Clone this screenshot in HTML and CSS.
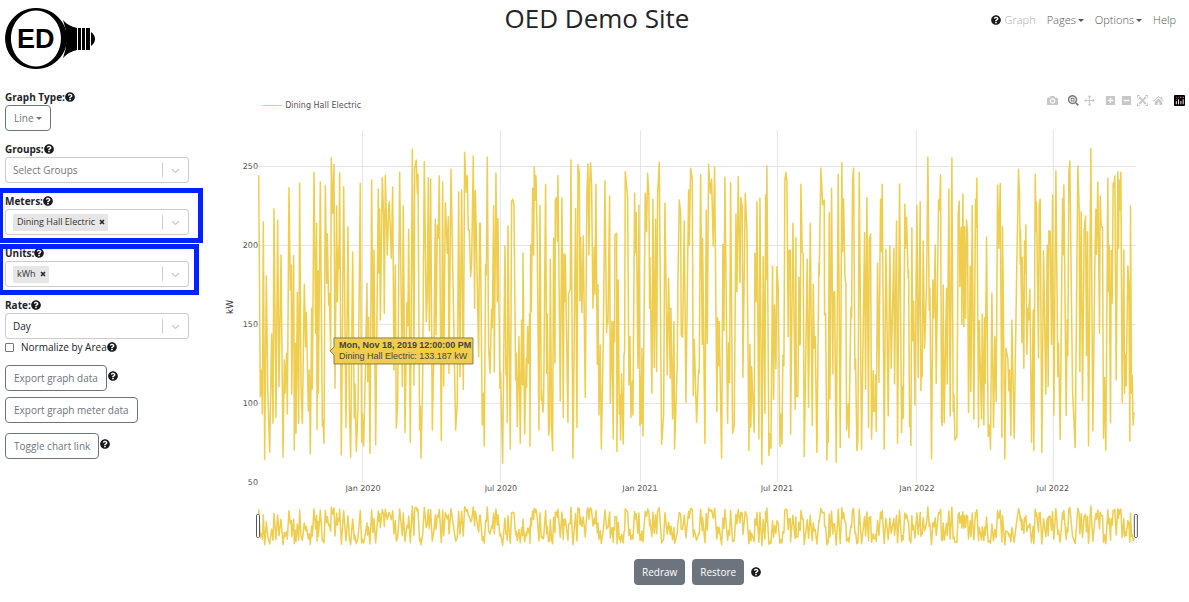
FILE: index.html
```html
<!DOCTYPE html>
<html lang="en">
<head>
<meta charset="utf-8">
<title>OED Demo Site</title>
<link rel="stylesheet" href="styles.css">
</head>
<body>
<svg class="defs" aria-hidden="true">
  <symbol id="question" viewBox="0 0 512 512"><path d="M504 256c0 137-111 248-248 248S8 393 8 256C8 119.100 119 8 256 8s248 111.100 248 248zM262.700 90c-54.500 0-89.300 23-116.600 63.800-3.500 5.300-2.400 12.400 2.700 16.200l34.700 26.300c5.200 4 12.600 3 16.700-2.100 17.900-22.700 30.100-35.800 57.300-35.800 20.400 0 45.700 13.100 45.700 33 0 15-12.400 22.700-32.500 34C247.100 238.500 216 255 216 296v4c0 6.600 5.400 12 12 12h56c6.600 0 12-5.400 12-12v-1.300c0-28.500 83.200-29.600 83.200-106.700 0-58-60.200-102-116.500-102zM256 338c-25.400 0-46 20.600-46 46s20.600 46 46 46 46-20.600 46-46-20.600-46-46-46z"/></symbol>
  <symbol id="chevron" viewBox="0 0 20 20"><path d="M4.500 7.500c.5-.4 1-.4 1.500 0L10 11.400l4-3.900c.5-.4 1-.4 1.500 0s.4 1.200 0 1.600l-4.700 4.500c-.5.400-1.100.4-1.600 0L4.500 9.100c-.4-.4-.4-1.200 0-1.600z"/></symbol>
</svg>

<header class="header">
  <a class="logo" href="#" aria-label="Home">
    <svg viewBox="0 0 90 62" width="90" height="62">
      <path fill-rule="evenodd" d="M31 0a31 30.500 0 1 0 .1 0zM31 2.500a25 28 0 1 1-.1 0z"/>
      <path d="M58 12q5 6 14 8v22q-9 2-14 8 7-19 0-38z"/>
      <path d="M73 20h3v22h-3zM77 20h3v22h-3zM81 20h4v22h-4zM86 24q4 3 4 7t-4 7z"/>
      <text class="logo-text" x="12" y="40">ED</text>
    </svg>
  </a>
  <h1 class="title">OED Demo Site</h1>
  <nav class="nav">
    <svg class="help nav-help"><use href="#question"/></svg>
    <a class="disabled" href="#">Graph</a>
    <button class="caret" type="button">Pages</button>
    <button class="caret" type="button">Options</button>
    <a href="#">Help</a>
  </nav>
</header>

<div class="layout">
  <aside class="sidebar">
    <div class="field">
      <div class="label"><label for="type">Graph Type:</label><svg class="help"><use href="#question"/></svg></div>
      <button class="btn caret" id="type" type="button">Line</button>
    </div>
    <div class="field">
      <div class="label"><label for="groups">Groups:</label><svg class="help"><use href="#question"/></svg></div>
      <div class="picker">
        <select class="muted" id="groups"><option>Select Groups</option></select>
        <span class="arrow"><svg><use href="#chevron"/></svg></span>
      </div>
    </div>
    <div class="field mark mark-meters">
      <div class="label"><label for="meters">Meters:</label><svg class="help"><use href="#question"/></svg></div>
      <div class="picker">
        <span class="chip">Dining Hall Electric<button type="button" aria-label="Remove Dining Hall Electric"><svg viewBox="0 0 6 6"><path d="M1 1l4 4M5 1L1 5"/></svg></button></span>
        <input id="meters" type="text">
        <span class="arrow"><svg><use href="#chevron"/></svg></span>
      </div>
    </div>
    <div class="field mark mark-units">
      <div class="label"><label for="units">Units:</label><svg class="help"><use href="#question"/></svg></div>
      <div class="picker">
        <span class="chip">kWh<button type="button" aria-label="Remove kWh"><svg viewBox="0 0 6 6"><path d="M1 1l4 4M5 1L1 5"/></svg></button></span>
        <input id="units" type="text">
        <span class="arrow"><svg><use href="#chevron"/></svg></span>
      </div>
    </div>
    <div class="field rate">
      <div class="label"><label for="rate">Rate:</label><svg class="help"><use href="#question"/></svg></div>
      <div class="picker">
        <select id="rate"><option>Day</option></select>
        <span class="arrow"><svg><use href="#chevron"/></svg></span>
      </div>
    </div>
    <div class="check"><input id="area" type="checkbox"><label for="area">Normalize by Area</label><svg class="help"><use href="#question"/></svg></div>
    <div class="action"><button class="btn" type="button">Export graph data</button><svg class="help"><use href="#question"/></svg></div>
    <div class="action"><button class="btn" type="button">Export graph meter data</button></div>
    <div class="action spaced"><button class="btn" type="button">Toggle chart link</button><svg class="help"><use href="#question"/></svg></div>
  </aside>

  <main class="main">
    <div class="toolbar">
      <div class="legend"><span class="swatch"></span>Dining Hall Electric</div>
      <div class="modebar">
        <button type="button" aria-label="Download plot"><svg viewBox="0 0 12 12"><path fill-rule="evenodd" d="M1 3h2l1-2h4l1 2h2q1 0 1 1v6q0 1-1 1H1q-1 0-1-1V4q0-1 1-1zM6 3.500a3 3 0 1 0 .1 0zM6 5a1.600 1.600 0 1 1-.1 0z"/></svg></button>
        <button class="active gap" type="button" aria-label="Zoom"><svg viewBox="0 0 12 12"><path fill-rule="evenodd" d="M5 0a5 5 0 1 0 2.900 9l2.600 3L12 10.500 9 8A5 5 0 0 0 5 0zM5 1.500a3.500 3.500 0 1 1-.1 0zM3 3h4v4H3zM4 4v2h2V4z"/></svg></button>
        <button type="button" aria-label="Pan"><svg viewBox="0 0 12 12"><path d="M6 0l2 2.500H6.500v3h3V4L12 6 9.500 8V6.500h-3v3H8L6 12 4 9.500h1.500v-3h-3V8L0 6l2.500-2v1.500h3v-3H4z"/></svg></button>
        <button class="gap" type="button" aria-label="Zoom in"><svg viewBox="0 0 12 12"><path fill-rule="evenodd" d="M1 1h10v10H1zM5.200 3v2.200H3v1.600h2.200V9h1.600V6.800H9V5.200H6.800V3z"/></svg></button>
        <button type="button" aria-label="Zoom out"><svg viewBox="0 0 12 12"><path fill-rule="evenodd" d="M1 1h10v10H1zM3 5.200v1.600h6V5.200z"/></svg></button>
        <button type="button" aria-label="Autoscale"><svg viewBox="0 0 12 12"><path d="M0 0h3v1H1v2H0zM9 0h3v3h-1V1H9zM0 9h1v2h2v1H0zM11 9h1v3H9v-1h2zM2 2h3L4.200 2.800 6 4.700l1.800-1.900L7 2h3v3l-.8-.8L7.300 6l1.900 1.800L10 7v3H7l.8-.8L6 7.300 4.200 9.200 5 10H2V7l.8.8L4.700 6 2.800 4.200 2 5z"/></svg></button>
        <button type="button" aria-label="Reset axes"><svg viewBox="0 0 12 12"><path d="M6 1l2.500 2.300V2h1.500v2.700L12 6.500l-.7.700L6 2.500.7 7.200 0 6.500zM6 3.800l4 3.500V11H7V8H5v3H2V7.300z"/></svg></button>
        <a class="plotly" href="#" aria-label="Plotly"><svg viewBox="0 0 12 12"><rect width="12" height="12" rx="1"/><path class="pink" d="M2 2h1v1H2zM4.500 2h1v1h-1zM2 4.500h1v1H2z"/><path class="white" d="M2 6.500h1V10H2zM4.500 4.500h1V10h-1zM7 2h1v1H7zM7 6.500h1V10H7zM9.500 2h1v1h-1zM9.500 4.500h1V10h-1z"/></svg></a>
      </div>
    </div>
    <svg class="chart" viewBox="0 0 991 440" role="img" aria-label="Dining Hall Electric, kW">
      <g class="grid">
        <path d="M60 54.500h878M60 133.500h878M60 212.500h878M60 291.500h878"/>
        <path d="M164.500 18v352M302.500 18v352M442.500 18v352M579.500 18v352M718.500 18v352M855.500 18v352"/>
      </g>
      <path class="line" id="line"/>
      <g class="axis end">
        <text x="60" y="57">250</text><text x="60" y="136">200</text><text x="60" y="215">150</text><text x="60" y="294">100</text><text x="60" y="373">50</text>
      </g>
      <g class="axis mid">
        <text x="165" y="379">Jan 2020</text><text x="303" y="379">Jul 2020</text><text x="442" y="379">Jan 2021</text><text x="579" y="379">Jul 2021</text><text x="719" y="379">Jan 2022</text><text x="855" y="379">Jul 2022</text>
      </g>
      <text class="unit" transform="translate(35 195) rotate(-90)">kW</text>
      <path class="line" id="range"/>
      <g class="handle"><rect x="58.500" y="402.500" width="3" height="23" rx="1"/><rect x="936.500" y="402.500" width="3" height="23" rx="1"/></g>
      <g class="tip">
        <path d="M132 239l4-4v-9h139v26H136v-9z"/>
        <text class="strong" x="141" y="236">Mon, Nov 18, 2019 12:00:00 PM</text>
        <text x="141" y="247">Dining Hall Electric: 133.187 kW</text>
      </g>
    </svg>
    <div class="buttons">
      <button class="solid" type="button">Redraw</button>
      <button class="solid" type="button">Restore</button>
      <svg class="help"><use href="#question"/></svg>
    </div>
  </main>
</div>
<script src="chart.js"></script>
</body>
</html>
```
FILE: styles.css
```css
* { box-sizing: border-box; }
body {
  margin: 0;
  background: #fff;
  color: #212529;
  font: 10px/16px "Open Sans", "Noto Sans", sans-serif;
}
button, input, select { font: inherit; color: inherit; margin: 0; }
a { color: inherit; text-decoration: none; }
button { cursor: pointer; }
.defs { position: absolute; width: 0; height: 0; }

.header {
  display: grid;
  grid-template-columns: 1fr auto 1fr;
  align-items: start;
  padding: 8px 0 0 5px;
  height: 89px;
}
.logo svg { display: block; }
.logo-text { font: bold 27px "Liberation Sans", Arial, sans-serif; }
.title { margin: 0; font-size: 26px; line-height: 20px; font-weight: 500; }
.nav {
  display: flex;
  justify-content: flex-end;
  align-items: center;
  gap: 11px;
  padding: 4px 13px 0 0;
  font-size: 11px;
}
.nav a, .nav button { color: #555; font-weight: 300; }
.nav .disabled { color: #aaa; }
.nav button { padding: 0; border: 0; background: none; }
.nav-help { margin-right: -7px; }
.help { width: 10px; height: 10px; flex: none; fill: #17191c; display: block; }
.caret::after {
  content: "";
  display: inline-block;
  margin-left: 2px;
  vertical-align: 2px;
  border: 3px solid transparent;
  border-top-color: currentColor;
  border-bottom: 0;
}

.layout { display: grid; grid-template-columns: minmax(0, 1fr) minmax(0, 5fr); }
.sidebar { padding: 0 9px 0 5px; }
.field { margin-bottom: 10px; position: relative; }
.label { display: flex; align-items: center; height: 16px; font-weight: 700; }
.btn {
  height: 26px;
  padding: 0 8px;
  border: 1px solid #6c757d;
  border-radius: 4px;
  background: #fff;
  color: #6c757d;
  white-space: nowrap;
  display: block;
}
.picker {
  display: flex;
  align-items: center;
  height: 26px;
  border: 1px solid #ccc;
  border-radius: 3px;
  padding-left: 7px;
}
.picker select, .picker input {
  flex: 1;
  min-width: 0;
  border: 0;
  padding: 0;
  background: none;
  appearance: none;
  outline: 0;
}
.picker .muted { color: #777; }
.arrow {
  width: 26px;
  height: 14px;
  border-left: 1px solid #ccc;
  display: grid;
  place-items: center;
  pointer-events: none;
}
.arrow svg { width: 13px; height: 13px; fill: #ccc; }
.chip {
  display: flex;
  align-items: center;
  height: 17px;
  padding: 0 3px 0 4px;
  background: #e6e6e6;
  border-radius: 1px;
  font-size: 9px;
  color: #333;
  white-space: nowrap;
}
.chip button { border: 0; background: none; padding: 0; margin-left: 4px; display: flex; }
.chip svg { width: 6px; height: 6px; stroke: #222; stroke-width: 1.5; }
.mark::after {
  content: "";
  position: absolute;
  left: -5px;
  border: 5px solid #0022ff;
  border-left-width: 3px;
  pointer-events: none;
}
.mark-meters::after { top: -5px; bottom: -8px; right: -14px; }
.mark-units::after { top: -1px; bottom: -8px; right: -10px; }
.rate { margin-bottom: 0; }
.check { display: flex; align-items: center; height: 16px; margin-bottom: 10px; }
.check input {
  appearance: none;
  width: 9px;
  height: 9px;
  border: 1px solid #777;
  border-radius: 1px;
  margin-right: 7px;
}
.action { display: flex; align-items: center; gap: 1px; margin-bottom: 6px; }
.spaced { margin-top: 10px; }
.action .help { margin-bottom: 4px; }

.main { min-width: 0; }
.toolbar {
  display: flex;
  justify-content: space-between;
  align-items: center;
  height: 23px;
  padding: 0 3px 0 64px;
}
.legend {
  display: flex;
  align-items: center;
  gap: 3px;
  padding-top: 10px;
  font: 8px/12px "DejaVu Sans", sans-serif;
  color: #555;
}
.swatch { width: 20px; height: 1px; background: #efcd4e; }
.modebar { display: flex; gap: 4px; }
.modebar button, .modebar a { border: 0; padding: 0; background: none; width: 12px; height: 12px; }
.modebar svg { width: 11px; height: 11px; display: block; fill: #c7c7c7; }
.modebar .active svg { fill: #777; }
.modebar .gap { margin-left: 5px; }
.modebar .plotly { margin-left: 5px; }
.plotly rect { fill: #000; }
.plotly .pink { fill: #e8507a; }
.plotly .white { fill: #fff; }

.chart { display: block; width: 100%; height: auto; }
.grid path { stroke: #e5e5e5; stroke-width: 1; fill: none; }
.line { fill: none; stroke: #efcd4e; stroke-width: 1.500; stroke-linejoin: round; }
.axis { font: 8px "DejaVu Sans", sans-serif; fill: #555; }
.end { text-anchor: end; }
.mid { text-anchor: middle; }
.unit { font: 9px "DejaVu Sans", sans-serif; fill: #333; text-anchor: middle; }
.handle rect { fill: #fff; stroke: #555; }
.tip path { fill: #efcd4e; stroke: #8a7c4b; }
.tip text { font: 9px "Liberation Sans", Arial, sans-serif; fill: #444; }
.tip .strong { font-weight: bold; }

.buttons { display: flex; justify-content: center; align-items: center; gap: 7px; padding: 7px 0 0 8px; }
.solid {
  height: 26px;
  padding: 0 8px;
  border: 0;
  border-radius: 4px;
  background: #6c757d;
  color: #fff;
}
```
FILE: chart.js
```js
// Readings as "x:y" pairs, three units per chart pixel, y measured down from the top of the plot.
const parts = [
  { start: -114, points: "116:136 121:800 125:720 127:852 130:275 134:988 139:437 143:770 149:967 155:612 159:880 162:237 168:862 173:270 177:770 183:375 189:982 193:690 195:790 200:670 202:852 207:173 211:480 214:405 215:793 221:377 223:960 226:640 228:910 232:487 236:880 239:160 243:770 247:880 253:463 257:650 259:548 265:843 268:720 271:972 275:535 277:778 282:127 287:610 290:280 291:898 294:423 295:790 301:155 307:888 309:870 312:940 316:167 320:460 322:312 326:525 328:490 332:660 334:83 338:250 342:103 345:775 350:227 352:515 356:350 357:415 359:128 364:975 371:170 378:892 384:290 388:820 392:982 398:366 403:865 405:762 409:964 414:832 421:160 425:938 427:850 431:948 436:730 441:460 443:755 446:562 450:970 455:150 459:700 462:360 467:945 475:177 477:430 479:237 481:570 487:143 491:260 493:550 496:136 502:375 506:230 508:215 514:385 518:171 522:720 526:405 529:895 533:820 539:127 547:770 550:227 555:908 561:517 564:587 566:298 571:938 577:58 582:765 584:115 589:90 592:190 594:133 599:900 601:830 603:984 608:760 613:95 619:575 622:500 625:143 628:602 632:147 637:900 642:650 646:268 648:615 652:285 655:325 658:138 664:932 668:157 671:768 676:218 682:370 685:260 687:730 693:118 699:450 707:900 712:818 716:186 720:740 725:180 730:778 734:67 739:187 742:137 745:300 748:300 752:440 755:400 760:78 764:535 766:182 769:310 776:680 779:280" },
  { start: 666, points: "1:280 7:885 10:790 13:948 17:405 19:435 22:82 26:650 30:730 35:538 37:593 41:228 43:725 48:130 52:515 54:266 60:775 62:727 68:1000 75:348 78:735 80:685 82:878 84:288 91:957 95:215 98:208 102:225 107:750 109:670 112:890 117:620 121:940 125:570 128:765 129:370 134:912 139:685 140:772 143:590 146:700 149:552 150:950 152:345 154:545 158:175 161:375 163:112 166:210 168:137 172:345 177:900 180:226 184:810 185:780 189:847 191:815 197:163 200:730 202:552 206:915 209:890 211:388 215:885 218:962 221:325 225:700 226:210 230:202 232:333 234:137 241:813 246:203 250:863 252:370 254:515 256:375 264:877 266:490 271:480 273:90 279:985 287:236 291:893 294:104 298:125 300:513 302:322 306:548 310:318 316:802 321:180 324:102 327:375 330:130 332:98 335:165 339:535 343:352 345:493 348:163 352:703 354:465 357:855 361:645 364:957 370:640 375:152 380:608 382:565 384:580 389:198 391:820 396:574 400:927 401:575 404:635 405:315 410:310 411:965 415:450 418:853 420:795 422:930 425:732 430:942 432:675 434:665 436:125 443:200 447:765 450:620 453:863 457:753 459:855 464:190 467:368 469:248 474:715 477:226 480:887 483:740 485:880 486:655 489:918 496:190 500:305 503:130 507:200 509:535 510:382 516:790 519:208 523:712 527:268 530:725 533:195 538:97 545:943 551:855 555:220 562:735 566:445 571:745 573:535 578:867 582:575 584:957 592:700 594:460 598:210 602:250 604:615 608:622 613:273 618:817 626:180 628:345 632:115 637:145 640:797 643:628 650:877 656:720 658:730 662:134 667:643 668:325 675:940 679:240 682:640 686:102 691:190 695:148 700:348 704:112 711:845 713:563 716:707 718:575 725:985 729:343 732:602 735:142 743:880 746:638 749:758 752:158 758:910 763:885 768:252 771:485 775:140 780:458 783:203 787:230 789:742 796:190 801:300 807:962 810:643 813:892 815:710 823:907 825:370 829:515 831:215 837:927 840:205 846:1003 850:380 855:850 857:195 859:448 861:107 867:977 870:912 873:955 878:408 881:808 884:525 888:716 891:410 895:475 900:950 902:852 906:942 909:675 912:707 915:150 918:127 921:155 925:620 927:362 931:360 932:912 939:280 946:838 948:323 949:800 954:800 957:442 960:645" },
  { start: 1626, points: "1:640 3:163 7:368 10:370 13:980 22:387 26:832 31:280 37:887 40:463 43:655 46:620 51:968 57:398 58:435 63:115 68:224 73:210 74:555 77:550 81:990 83:875 85:937 88:248 90:807 95:175 99:732 100:488 104:485 109:997 115:133 121:953 126:98 128:365 131:207 135:440 138:460 140:900 145:822 147:923 153:533 155:563 158:150 161:115 165:718 167:687 171:962 174:930 178:127 185:958 194:308 197:778 201:203 206:893 208:330 212:312 215:927 220:722 222:845 226:840 227:735 229:905 233:400 237:757 242:208 245:365 247:163 253:957 258:358 262:620 265:858 270:347 274:715 282:355 284:762 290:273 293:940 299:162 305:908 308:770 310:865 315:223 317:355 320:262 325:445 326:420 329:890 331:840 333:947 336:293 338:632 341:513 345:825 351:227 355:743 361:215 363:782 365:660 367:740 370:333 374:655 380:470 384:82 388:540 390:475 395:987 399:450 402:563 406:345 409:760 416:210 419:240 422:135 425:870 427:887 430:465 433:878 440:475 442:762 447:177 451:858 456:84 460:845 462:793 465:930 471:920 475:250 478:213 480:470 484:292 486:582 489:192 492:590 494:290 497:565 500:270 503:310 506:848 511:408 513:785 517:226 522:867 527:208 529:292 531:144 536:892 538:572 545:867 547:552 552:885 554:563 556:760 560:322 565:920 569:885 572:958 576:490 581:893 585:620 589:815 593:165 597:355 601:160 606:922 608:290 615:987 618:655 624:685 627:783 629:720 633:917 636:570 643:925 650:450 656:118 659:200 661:403 662:300 666:638 667:382 672:715 674:333 677:428 678:285 681:673 684:535 686:570 690:478 695:937 700:540 702:962 706:133 709:303 710:217 716:683 718:225 721:208 726:967 731:362 738:792 742:345 745:770 747:302 751:305 755:643 758:195 762:855 768:123 774:740 776:640 781:928 788:205 791:375 792:165 799:857 802:570 804:677 807:125 810:93 818:780 826:953 834:108 838:240 840:725 844:245 848:812 853:300 857:258 860:677 863:305 866:948 873:55 879:903 885:400 888:238 890:373 894:155 899:610 901:198 904:290 908:290 911:925 914:743 918:962 924:145 926:485 928:345 932:878 934:362 937:520 940:160 942:172 945:138 949:750 954:125 956:355 958:150 960:240 963:127 967:817 972:360 974:790 977:675 979:768 984:408 987:465 990:933 992:228 995:790 997:737 1000:885 1002:850 1005:850" }
];

const data = parts.flatMap(({ start, points }) =>
  points.split(" ").map(pair => {
    const [x, y] = pair.split(":").map(Number);
    return [(x + start) / 3 + 60, y];
  })
);

const trace = scale => "M" + data.map(([x, y]) => x.toFixed(2) + " " + scale(y).toFixed(2)).join("L");

document.getElementById("line").setAttribute("d", trace(y => 18 + y / 3));
document.getElementById("range").setAttribute("d", trace(y => 394 + (y - 55) / 24));
```
